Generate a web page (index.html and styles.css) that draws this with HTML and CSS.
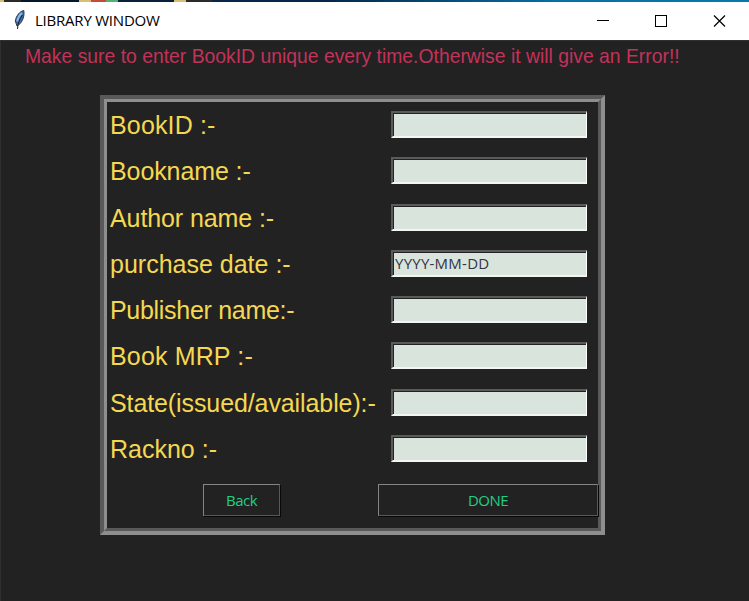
FILE: index.html
```html
<!DOCTYPE html>
<html lang="en">
<head>
<meta charset="utf-8">
<title>LIBRARY WINDOW</title>
<link rel="stylesheet" href="styles.css">
</head>
<body>
<div class="desktop-edge"></div>
<header class="titlebar">
  <svg class="feather" width="14" height="22" viewBox="0 0 14 22">
    <path d="M10.800 1.500C7 2 3 7 2.300 12L4 17C8 15 12 9 10.800 1.500Z" fill="#3c6cab" stroke="#303c4a" stroke-width="1"/>
    <path d="M9 4C6.500 6 4.800 9 4.300 12.500" fill="none" stroke="#8fb9ea" stroke-width="2"/>
    <path d="M9.500 6C6.500 10 4.500 15 4.500 20" fill="none" stroke="#202020" stroke-width="1"/>
  </svg>
  <span class="title">LIBRARY WINDOW</span>
  <svg class="controls" width="150" height="38" viewBox="0 0 150 38" fill="none" stroke="#000" shape-rendering="crispEdges">
    <path d="M-2 18.500H10"/>
    <rect x="56.500" y="13.500" width="11" height="11"/>
    <path d="M115 13.500L126 24.500M126 13.500L115 24.500" shape-rendering="auto" stroke-width="1.200"/>
  </svg>
</header>
<main class="window">
  <p class="notice"><span>Make sure to enter BookID unique every time.Otherwise it will give an Error!!</span></p>
  <form class="panel">
    <div class="panel-body">
      <div class="row"><label class="loose" for="f1">BookID :-</label><input id="f1"></div>
      <div class="row"><label class="snug" for="f2">Bookname :-</label><input id="f2"></div>
      <div class="row"><label class="snug" for="f3">Author name :-</label><input id="f3"></div>
      <div class="row"><label for="f4">purchase date :-</label><input id="f4" value="YYYY-MM-DD"></div>
      <div class="row"><label class="tight" for="f5">Publisher name:-</label><input id="f5"></div>
      <div class="row"><label class="loose" for="f6">Book MRP :-</label><input id="f6"></div>
      <div class="row"><label class="snug" for="f7">State(issued/available):-</label><input id="f7"></div>
      <div class="row"><label for="f8">Rackno :-</label><input id="f8"></div>
      <div class="actions">
        <button type="button" class="back">Back</button>
        <button type="button" class="done">DONE</button>
      </div>
    </div>
  </form>
</main>
</body>
</html>
```
FILE: styles.css
```css
* { box-sizing: border-box; }
body {
  margin: 0;
  width: 749px;
  height: 601px;
  overflow: hidden;
  background: #222;
  font-family: "Open Sans", "Noto Sans", sans-serif;
}
.desktop-edge {
  height: 2px;
  background: linear-gradient(90deg, #d8bd72 0 4px, #2c2a28 4px 21px, #07172b 21px 79px, #d8bd72 79px 91px, #c74a3c 91px 106px, #54b078 106px 118px, #07203c 118px 174px, #d8bd72 174px 186px, #2c2a28 186px 212px, #05284a 212px 330px, #0870a5 560px, #0879ad);
}
.titlebar {
  display: flex;
  height: 38px;
  background: #fff;
}
.feather { margin: 7px 8px 0 13px; }
.title {
  flex: 1;
  font-size: 15px;
  line-height: 37px;
  color: #000;
  letter-spacing: -0.22px;
  white-space: nowrap;
}
.controls { flex: none; width: 150px; overflow: visible; }
.window {
  height: 561px;
  border-top: 1px solid #303030;
  border-left: 1px solid #303030;
}
.notice {
  margin: 0 0 0 24px;
  height: 54px;
  font: 21px/29px "Liberation Sans", sans-serif;
  color: #c3325a;
  white-space: nowrap;
}
.notice span {
  display: inline-block;
  transform: scaleX(0.921);
  transform-origin: left;
}
/* Grooved frame: a sunken outer bevel round a raised inner one */
.panel {
  margin-left: 99px;
  width: 505px;
  height: 440px;
  border: 4px solid;
  border-color: #595959 #8e8e8e #8e8e8e #595959;
}
.panel-body {
  height: 100%;
  padding: 6px 0 0 3px;
  border: 3px solid;
  border-color: #8e8e8e #595959 #595959 #8e8e8e;
}
.row {
  display: flex;
  justify-content: space-between;
  height: 46.3px;
  padding: 3px 11px 0 0;
}
.row label {
  font: 25px/28px "Liberation Sans", sans-serif;
  color: #f5d851;
  white-space: nowrap;
}
.row .loose { letter-spacing: 0.15px; }
.row .snug { letter-spacing: -0.1px; }
.row .tight { letter-spacing: -0.3px; }
.row input {
  width: 196px;
  height: 27px;
  margin: 0;
  padding: 0 0 0 2px;
  border: 2px solid;
  border-color: #5a5a5a #fff #f2f5f3 #5a5a5a;
  border-width: 2px 1.500px 2px 2px;
  border-radius: 0;
  box-shadow: inset 1px 1px #222;
  background: #d9e4dc;
  color: #33334a;
  font: 15px/20px "Open Sans", sans-serif;
  letter-spacing: 0.25px;
  outline: none;
}
.actions {
  display: flex;
  justify-content: space-between;
  padding: 6px 0 0 93px;
}
.actions button {
  height: 32px;
  margin: 0;
  padding: 0 0 1px;
  border: 1px solid;
  border-color: #858585 #585858 #585858 #858585;
  border-radius: 0;
  box-shadow: 1px 1px #080808;
  background: #222;
  color: #21cf84;
  font: 15px/20px "Open Sans", sans-serif;
  letter-spacing: -0.5px;
}
.actions .back { width: 77px; }
.actions .done { width: 220px; }
```
